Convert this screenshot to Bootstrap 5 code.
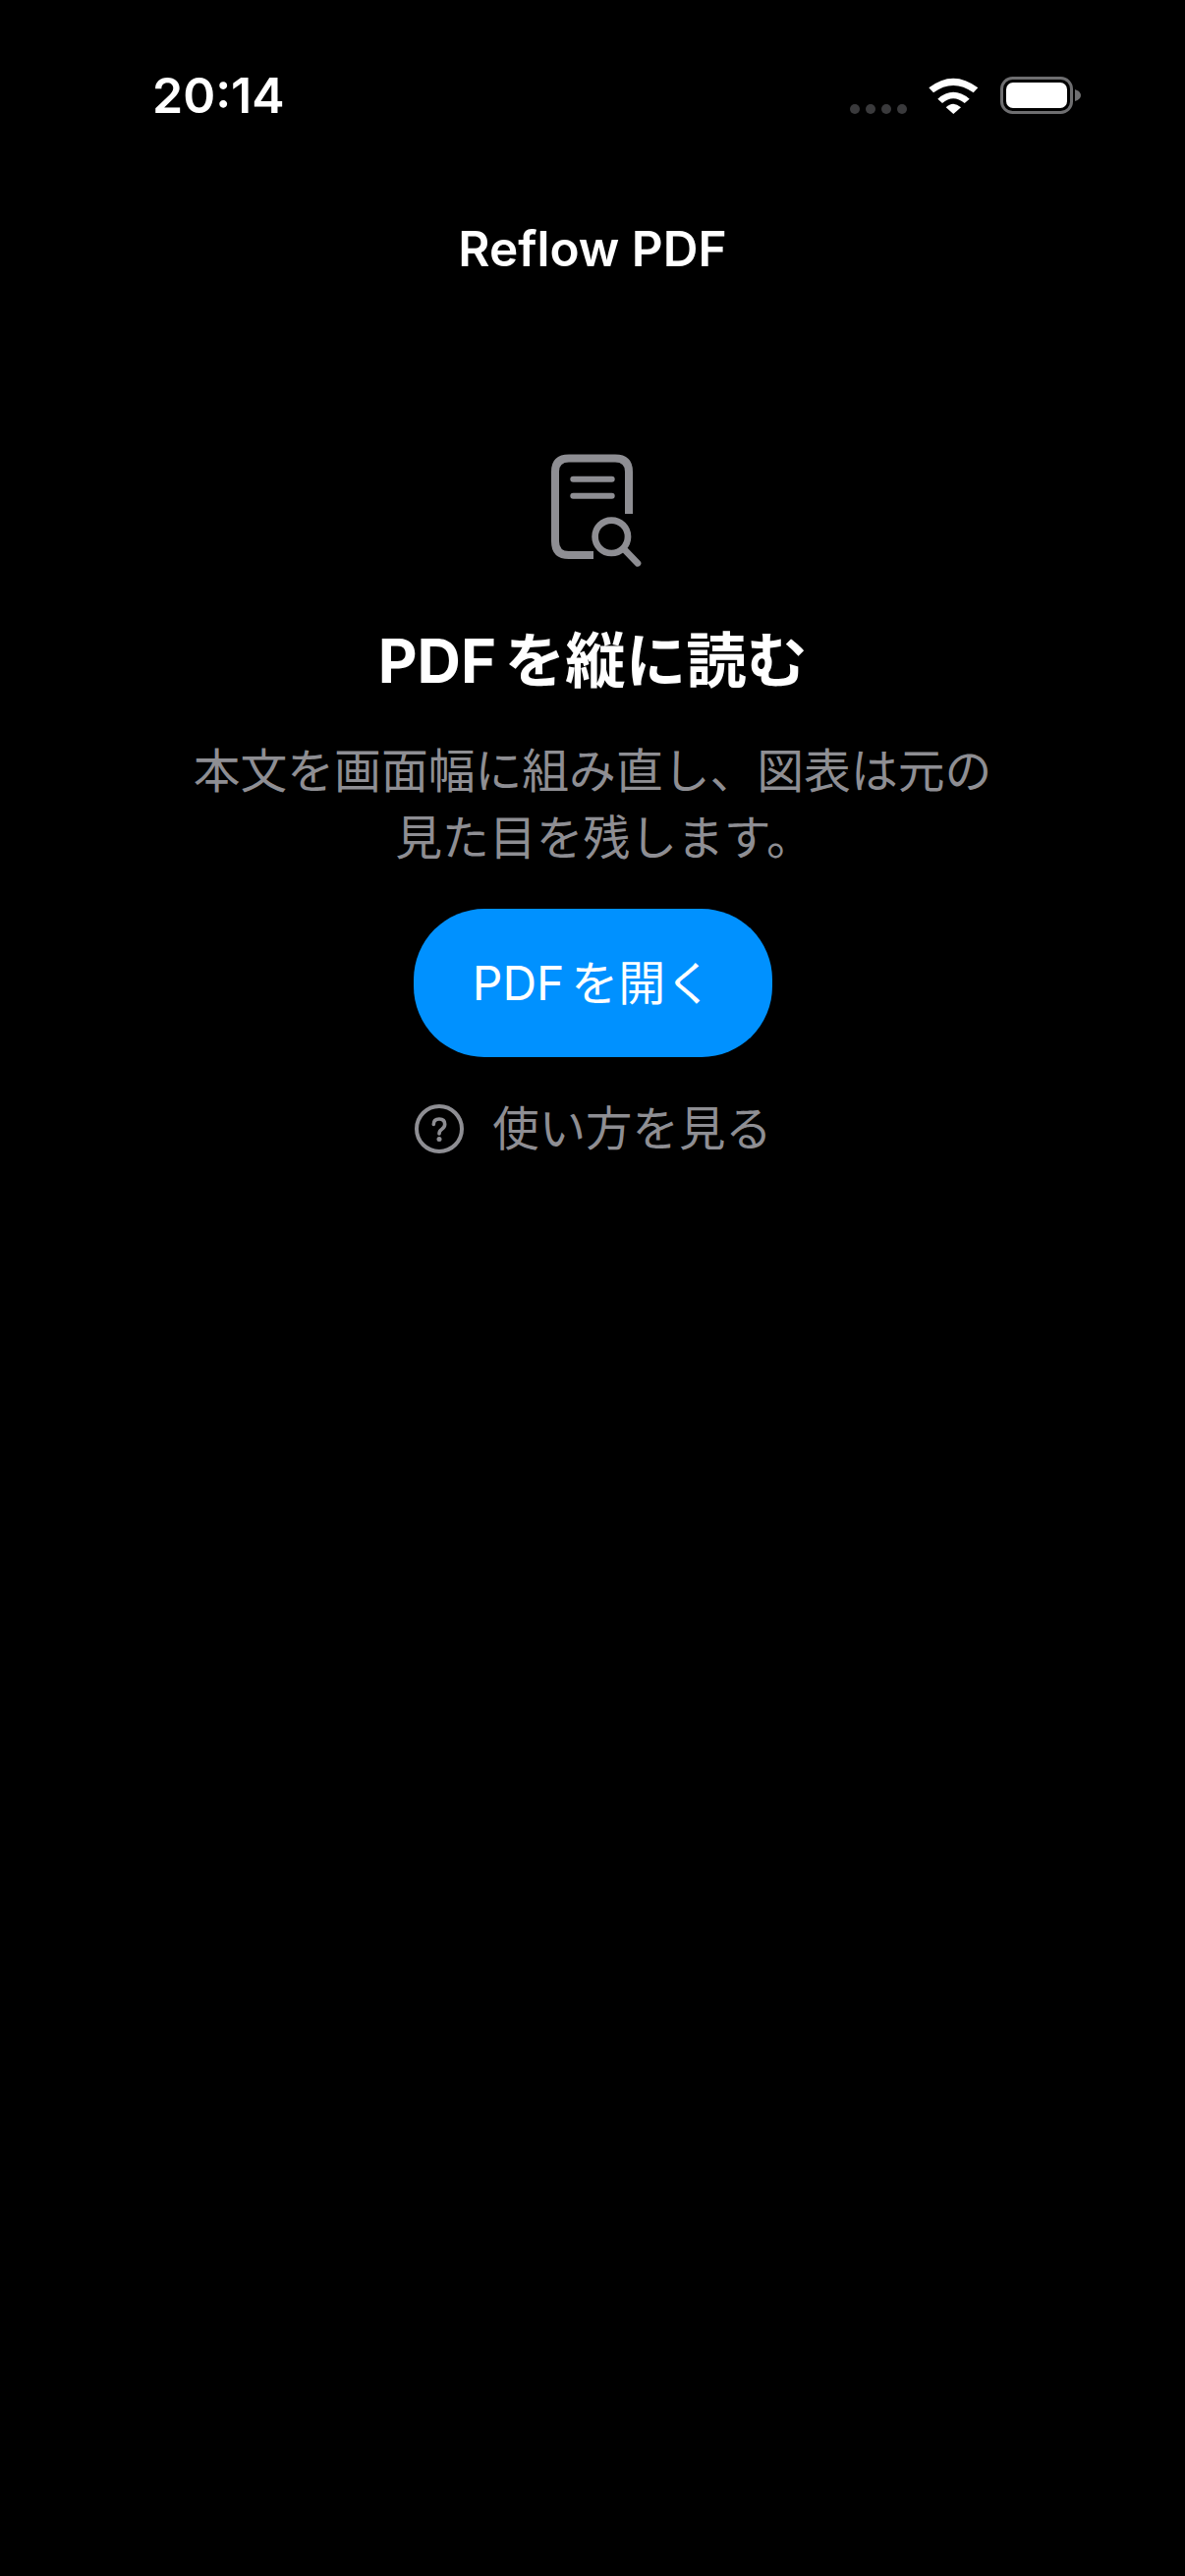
<!DOCTYPE html>
<html lang="ja">
<head>
  <meta charset="UTF-8">
  <title>Reflow PDF</title>
  <meta name="viewport" content="width=device-width, initial-scale=1">
  <link href="https://cdn.jsdelivr.net/npm/bootstrap@5.3.3/dist/css/bootstrap.min.css" rel="stylesheet">
  <style>
    body { background: #000; color: #fff; font-family: Inter, "Noto Sans CJK JP", sans-serif; min-height: 2622px; }
    .status-row { height: 38px; margin-top: 78px; padding: 0 106px 0 155px; }
    .clock { font-size: 50px; font-weight: 600; line-height: 38px; }
    .signal-dot { width: 10px; height: 10px; border-radius: 50%; background: #3a3a3c; }
    .signal-dots { gap: 6px; }
    .status-icons { gap: 22px; }
    .app-title { font-size: 49.5px; font-weight: 600; line-height: 60px; margin-top: 107px; margin-bottom: 0; }
    .doc-icon { margin-top: 179px; margin-left: 7px; display: block; }
    .empty-title { font-size: 61.5px; font-weight: 700; line-height: 76px; margin-top: 58px; margin-bottom: 0; }
    .latin-run { margin-right: 0.14em; }
    .empty-text { font-size: 47.8px; line-height: 68px; color: #8e8e93; margin-top: 40px; margin-bottom: 0; }
    .hang-stop { margin-right: -24px; }
    .open-btn { width: 365px; height: 151px; border: 0; border-radius: 72px; background: #0091ff; color: #fff; font-size: 48px; margin-top: 38px; }
    .open-btn:hover, .open-btn:active { background: #0091ff !important; color: #fff !important; }
    .help-btn { border: 0; padding: 0; color: #8e8e93; font-size: 47.4px; line-height: 68px; gap: 29px; margin-top: 39px; margin-left: 2px; }
    .help-btn:hover { color: #8e8e93; }
  </style>
</head>
<body>
<div class="status-row d-flex justify-content-between align-items-center">
  <span class="clock">20:14</span>
  <div class="status-icons d-flex align-items-center">
    <div class="signal-dots d-flex align-self-end mb-0">
      <span class="signal-dot"></span><span class="signal-dot"></span><span class="signal-dot"></span><span class="signal-dot"></span>
    </div>
    <svg width="51" height="38" viewBox="0 0 51 38" fill="#fff">
      <path d="M0.3 11.3 Q25 -8 50.3 11.3 L45.7 16.3 Q25 1.5 5 16.3 Z"/>
      <path d="M9.3 22.7 Q25 9 41.7 22.7 L36.7 27 Q25 17.5 14 27 Z"/>
      <path d="M17.7 31.3 Q25 24 33 31.3 L25.3 38 Z"/>
    </svg>
    <svg width="82" height="38" viewBox="0 0 82 38">
      <rect x="1.5" y="1.5" width="71" height="35" rx="11" fill="none" stroke="#6e6e70" stroke-width="3"/>
      <rect x="6" y="6" width="62" height="26" rx="7" fill="#fff"/>
      <path d="M76 13 Q82 15 82 19 Q82 23 76 25 Z" fill="#6e6e70"/>
    </svg>
  </div>
</div>

<h1 class="app-title text-center">Reflow PDF</h1>

<main class="d-flex flex-column align-items-center text-center">
  <svg class="doc-icon" width="92" height="115" viewBox="31 23 92 115" fill="none" stroke="#8e8e93">
    <path d="M110 84 V41 Q110 27.5 96 27.5 H49 Q35 27.5 35 41 V112 Q35 126 49 126 H74" stroke-width="8"/>
    <path d="M53.3 48.7 H92.7 M53.3 65.7 H92.7" stroke-width="6" stroke-linecap="round"/>
    <circle cx="92.3" cy="107.3" r="16.7" stroke-width="6.7"/>
    <path d="M106.7 121.7 L119 134.3" stroke-width="6.7" stroke-linecap="round"/>
  </svg>
  <h2 class="empty-title"><span class="latin-run">PDF</span>を縦に読む</h2>
  <p class="empty-text">本文を画面幅に組み直し、図表は元の<br>見た目を残します<span class="hang-stop">。</span></p>
  <button type="button" class="btn open-btn"><span class="latin-run">PDF</span>を開く</button>
  <button type="button" class="btn help-btn d-flex align-items-center">
    <svg width="50" height="50" viewBox="0 0 50 50" fill="none" stroke="#8e8e93">
      <circle cx="25" cy="25" r="23" stroke-width="4"/>
      <path d="M19.3 20.5 Q19.3 15 25 15 Q30.7 15 30.7 20.3 Q30.7 23.5 27.5 25.5 Q25 27 25 30" stroke-width="3.6" stroke-linecap="round"/>
      <circle cx="25" cy="35.6" r="2.5" fill="#8e8e93" stroke="none"/>
    </svg>
    <span>使い方を見る</span>
  </button>
</main>
<script src="https://cdn.jsdelivr.net/npm/bootstrap@5.3.3/dist/js/bootstrap.bundle.min.js"></script>
</body>
</html>
